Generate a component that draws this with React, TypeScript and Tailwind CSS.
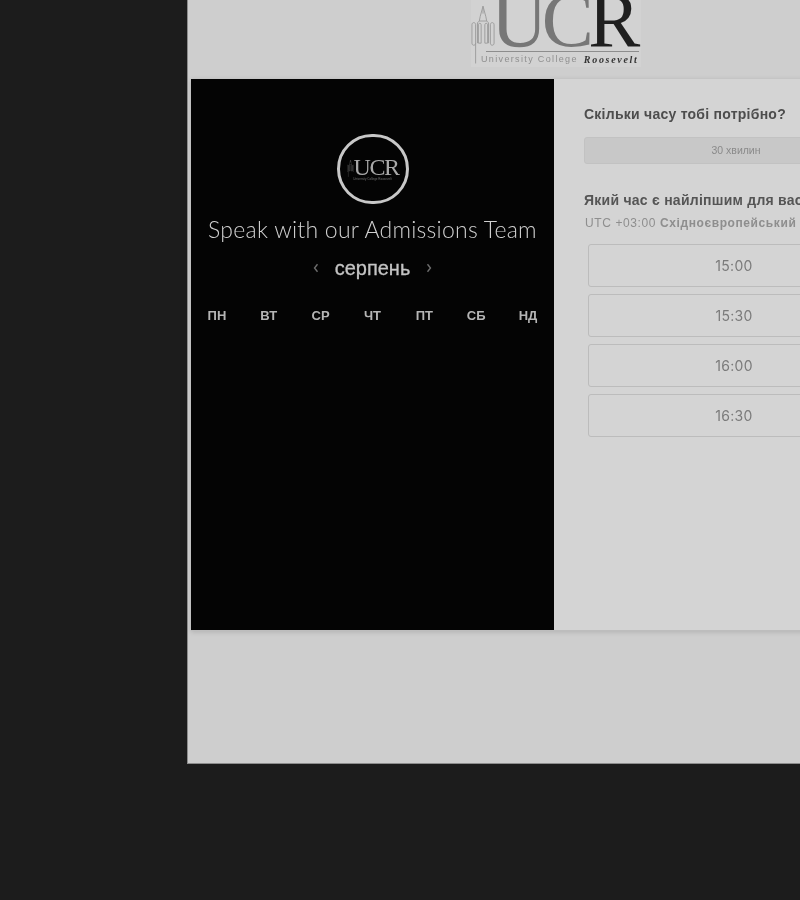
import React from "react";

const days = ["ПН", "ВТ", "СР", "ЧТ", "ПТ", "СБ", "НД"];
const slots = ["15:00", "15:30", "16:00", "16:30"];
const sans = "font-['Liberation_Sans',Arial,sans-serif]";

function Tower({ className, stroke }: { className: string; stroke: string }) {
  return (
    <svg viewBox="0 0 26 66" className={className} fill="none" stroke={stroke} strokeWidth="1">
      <path d="M5 66V44M13 4v8M13 4l-3 11-1 5-2 2v22M13 4l3 11 1 5 2 2v22M9 20h8" />
      <path d="M1 24c0-3 4-3 4 0v20c0 3-4 3-4 0zM8 24c0-2 3-2 3 0v20H8zM15 24c0-2 3-2 3 0v20h-3zM21 24c0-3 4-3 4 0v20c0 3-4 3-4 0z" />
    </svg>
  );
}

export default function App() {
  return (
    <div className={`h-[900px] w-[800px] overflow-hidden bg-[#1c1c1c] blur-[0.4px] ${sans}`}>
      <div className="ml-[187px] h-[764px] w-[613px] overflow-hidden border-b border-l border-[#8c8c8c] bg-[#cecece]">
        <header className="flex h-[79px] pl-[283px]">
          <div className="flex h-[67px] w-[170px] overflow-hidden bg-[#d2d2d2]">
            <Tower className="h-[66px] w-[24px] shrink-0" stroke="#9a9a9a" />
            <div className="ml-[-16px] flex min-w-0 flex-1 flex-col">
              <div className="mr-[2px] ml-[7px] flex h-[52px] shrink-0 items-end border-b border-[#8d8d8d] pl-[5px]">
                <div className="mb-[-7px] flex font-['Liberation_Serif',serif] text-[78px] leading-[76px] tracking-[-5.5px]">
                  <span className="text-[#777777]">UC</span>
                  <span className="text-[#1f1f1f]">R</span>
                </div>
              </div>
              <div className="mt-[2px] flex items-center gap-[6px] pl-[2px] whitespace-nowrap">
                <span className="text-[9px] leading-[11px] tracking-[1.35px] text-[#8f8f8f]">University College</span>
                <span className="font-['Liberation_Serif',serif] text-[10px] leading-[11px] font-bold tracking-[1.7px] text-[#333333] italic">
                  Roosevelt
                </span>
              </div>
            </div>
          </div>
        </header>

        <main className="ml-[3px] flex h-[552px] w-[800px] border-b border-[#bdbdbd] shadow-[0_1px_5px_rgba(0,0,0,0.15)]">
          <section className="flex w-[363px] shrink-0 flex-col items-center bg-[#040404] pt-[55px]">
            <div className="flex h-[70px] w-[72px] items-center justify-center rounded-full border-[3px] border-[#c8c8c8]">
              <div className="flex flex-col items-center">
                <div className="flex items-end">
                  <Tower className="h-[18px] w-[7px]" stroke="#777777" />
                  <span className="font-['Liberation_Serif',serif] text-[24px] leading-[19px] tracking-[-1.5px] text-[#a8a8a8]">
                    UCR
                  </span>
                </div>
                <span className="text-[3px] leading-[4px] whitespace-nowrap text-[#707070]">University College Roosevelt</span>
              </div>
            </div>
            <h1 className="mt-[10px] font-['Lato',sans-serif] text-[23px] leading-[30px] font-light tracking-[0.25px] whitespace-nowrap text-[#d0d0d0]">
              Speak with our Admissions Team
            </h1>
            <div className="mt-[12px] flex h-[24px] items-center gap-[16px]">
              <svg viewBox="0 0 8 12" className="h-[10px] w-[6px]" fill="none" stroke="#6e6e6e" strokeWidth="1.8">
                <path d="M6 1 2 6l4 5" />
              </svg>
              <span className="text-[20px] leading-[24px] font-normal text-[#c4c4c4] [-webkit-text-stroke:0.3px_#c4c4c4]">серпень</span>
              <svg viewBox="0 0 8 12" className="h-[10px] w-[6px]" fill="none" stroke="#6e6e6e" strokeWidth="1.8">
                <path d="m2 1 4 5-4 5" />
              </svg>
            </div>
            <div className="mt-[28px] grid w-full grid-cols-7">
              {days.map((d) => (
                <span key={d} className="text-center text-[13px] leading-[16px] font-bold text-[#b5b5b5]">
                  {d}
                </span>
              ))}
            </div>
          </section>

          <section className="flex-1 bg-[#d4d4d4] pt-[26px] pl-[30px]">
            <h2 className="text-[14px] leading-[18px] font-bold tracking-[0.25px] whitespace-nowrap text-[#4d4d4d]">
              Скільки часу тобі потрібно?
            </h2>
            <div className="mt-[14px] flex h-[27px] w-[304px] items-center justify-center rounded-[3px] border border-[#c2c2c2] bg-[#c8c8c8] text-[10.5px] text-[#8a8a8a]">
              30 хвилин
            </div>
            <h2 className="mt-[27px] text-[14px] leading-[18px] font-bold tracking-[0.25px] whitespace-nowrap text-[#555555]">
              Який час є найліпшим для вас?
            </h2>
            <p className="mt-[6px] pl-[1px] text-[12px] leading-[16px] tracking-[0.6px] whitespace-nowrap text-[#8e8e8e]">
              UTC +03:00 <span className="font-bold">Східноєвропейський час</span>
            </p>
            <div className="mt-[13px] ml-[4px] flex w-[292px] flex-col gap-[7px]">
              {slots.map((s) => (
                <div
                  key={s}
                  className="flex h-[43px] items-center justify-center rounded-[3px] border border-[#bcbcbc] bg-[#d4d4d4] font-['Inter',sans-serif] text-[14px] tracking-[0.3px] text-[#7a7a7a]"
                >
                  {s}
                </div>
              ))}
            </div>
          </section>
        </main>
      </div>
    </div>
  );
}
